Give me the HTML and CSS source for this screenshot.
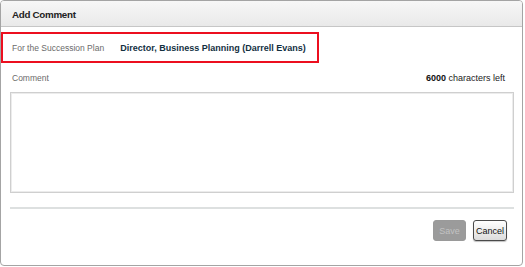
FILE: index.html
```html
<!DOCTYPE html>
<html lang="en">
<head>
  <meta charset="UTF-8">
  <title>Add Comment</title>
  <link rel="stylesheet" href="styles.css">
</head>
<body>
  <div class="dialog">
    <div class="dialog-header">Add Comment</div>

    <div class="plan">
      <span class="plan-label">For the Succession Plan</span>
      <span class="plan-name">Director, Business Planning (Darrell Evans)</span>
    </div>

    <div class="comment-head">
      <span class="comment-label">Comment</span>
      <span class="counter"><b>6000</b> characters left</span>
    </div>
    <textarea class="comment-box"></textarea>

    <div class="divider"></div>

    <div class="actions">
      <button class="btn btn-save" disabled>Save</button>
      <button class="btn btn-cancel">Cancel</button>
    </div>
  </div>
</body>
</html>
```

FILE: styles.css
```css
body {
  margin: 0;
  background: #fff;
  font-family: 'Liberation Sans', Arial, sans-serif;
  font-size: 9px;
  color: #333;
}
.dialog {
  width: 523px;
  height: 266px;
  box-sizing: border-box;
  border: 1px solid #a4a4a4;
  border-radius: 4px;
  background: #fff;
  display: flex;
  flex-direction: column;
}
.dialog-header {
  height: 25px;
  line-height: 28px;
  padding-left: 11px;
  font-size: 9.8px;
  font-weight: bold;
  letter-spacing: -0.3px;
  color: #222;
  background: linear-gradient(#f7f7f7, #e9e9e9);
  border-bottom: 1px solid #c6c6c6;
  border-radius: 3px 3px 0 0;
}
.plan {
  margin-top: 5px;
  width: 318px;
  height: 31px;
  box-sizing: border-box;
  border: 2px solid #ec0f1f;
  padding-left: 9px;
  display: flex;
  align-items: center;
  gap: 16px;
  white-space: nowrap;
}
.plan-label {
  font-size: 8.5px;
  color: #6b6b6b;
}
.plan-name {
  font-weight: bold;
  color: #13303f;
}
.comment-head {
  display: flex;
  justify-content: space-between;
  align-items: baseline;
  padding: 0 17px 0 11px;
  margin-top: 9px;
  line-height: 13px;
}
.comment-label {
  font-size: 8.5px;
  color: #6b6b6b;
}
.counter {
  color: #222;
}
.counter b {
  color: #111;
}
.comment-box {
  margin: 7px 8px 0 9px;
  height: 101px;
  box-sizing: border-box;
  border: 1px solid #cfcfcf;
  box-shadow: inset 0 0 0 1px #ececec;
  resize: none;
  padding: 4px;
  font: inherit;
}
.divider {
  margin: 14px 8px 0 9px;
  height: 2px;
  background: #dde0e0;
}
.actions {
  display: flex;
  justify-content: flex-end;
  gap: 7px;
  padding: 11px 15px 0 0;
}
.btn {
  height: 21px;
  padding: 0;
  font-family: 'Liberation Sans', Arial, sans-serif;
  font-size: 9px;
  border-radius: 3px;
}
.btn-save {
  width: 33px;
  background: #9b9b9b;
  border: 1px solid #9a9a9a;
  color: #c2c2c2;
}
.btn-cancel {
  width: 34px;
  background: linear-gradient(#ffffff, #dcdcdc);
  border: 1px solid #4a4a4a;
  color: #111;
  box-shadow: 0 1px 1px rgba(0, 0, 0, 0.25);
}
```
